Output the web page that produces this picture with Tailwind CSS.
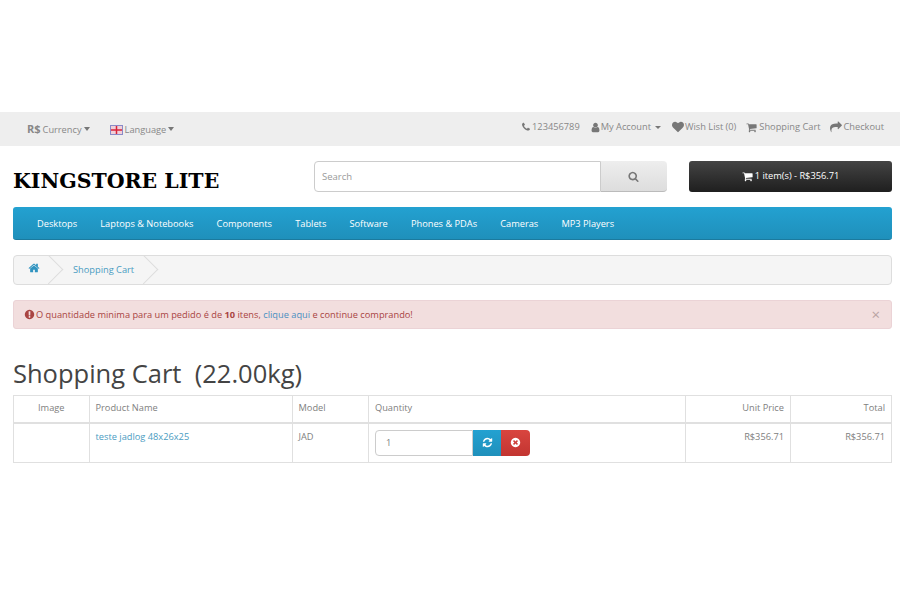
<!DOCTYPE html>
<html>
<head>
<meta charset="utf-8">
<title>Shopping Cart</title>
<script src="https://cdn.jsdelivr.net/npm/@tailwindcss/browser@4"></script>
</head>
<body class="bg-white font-['Open_Sans',sans-serif] text-[9.25px] text-[#666] h-[600px] overflow-hidden">
<div class="pt-[112px]">

  <!-- top bar -->
  <div class="h-[34px] bg-[#eee] flex items-center justify-between pl-[27px] pr-[16px] text-[#888]">
    <div class="flex items-center">
      <span class="flex items-center mt-[1px]"><b class="text-[#888] text-[11px] mr-[2px]">R$</b>Currency<i class="ml-[2px] mt-[-1px] border-x-[3.5px] border-x-transparent border-t-[4px] border-t-[#777]"></i></span>
      <span class="flex items-center ml-[20px] mt-[1px]">
        <svg class="w-[13px] h-[10px] mr-[2px]" viewBox="0 0 13 10"><rect width="13" height="10" fill="#8a8ac8"/><rect x="1" y="1" width="11" height="8" fill="#f0d0d8"/><path d="M1 5h11M6.500 1v8" stroke="#d8233a" stroke-width="1.500"/></svg>Language<i class="ml-[2px] mt-[-1px] border-x-[3.5px] border-x-transparent border-t-[4px] border-t-[#777]"></i>
      </span>
    </div>
    <div class="flex items-center mt-[-4px]">
      <span class="flex items-center">
        <svg class="w-[10px] h-[10px] mr-[1px]" viewBox="0 0 1792 1792" fill="#777"><path d="M1600 1240q0 27-10 70.500t-21 68.500q-21 50-122 106-94 51-186 51-27 0-53-3.500t-57.500-12.500-47-14.500-55.500-20.500-49-18q-98-35-175-83-127-79-264-216t-216-264q-48-77-83-175-3-9-18-49t-20.500-55.500-14.500-47-12.500-57.500-3.500-53q0-92 51-186 56-101 106-122 25-11 68.500-21t70.500-10q14 0 21 3 18 6 53 76 11 19 30 54t35 63.500 31 53.500q3 4 17.500 25t21.500 35.500 7 28.500q0 20-28.500 50t-62 55-62 53-28.500 46q0 9 5 22.500t8.500 20.500 14 24 11.500 19q76 137 174 235t235 174q2 1 19 11.500t24 14 20.500 8.500 22.500 5q18 0 46-28.500t53-62 55-62 50-28.500q14 0 28.500 7t35.500 21.500 25 17.500q25 15 53.500 31t63.500 35 54 30q70 35 76 53 3 7 3 21z"/></svg>123456789</span>
      <span class="flex items-center ml-[10px]">
        <svg class="w-[11px] h-[11px]" viewBox="0 0 1792 1792" fill="#777"><path d="M1536 1399q0 109-62.500 187t-150.500 78h-854q-88 0-150.500-78t-62.500-187q0-85 8.500-160.500t31.500-152 58.500-131 94-89 134.500-34.500q131 128 313 128t313-128q76 0 134.500 34.500t94 89 58.500 131 31.500 152 8.500 160.500zm-256-887q0 159-112.500 271.500t-271.500 112.500-271.500-112.500-112.500-271.500 112.500-271.500 271.500-112.500 271.500 112.500 112.500 271.500z"/></svg>My Account<i class="ml-[4px] mt-[1px] border-x-[3px] border-x-transparent border-t-[3px] border-t-[#777]"></i></span>
      <span class="flex items-center ml-[11px]">
        <svg class="w-[12px] h-[12px] mr-[1px]" viewBox="0 0 1792 1792" fill="#777"><path d="M896 1664q-26 0-44-18l-624-602q-10-8-27.500-26t-55.500-65.500-68-97.500-53.500-121-23.500-138q0-220 127-344t351-124q62 0 126.500 21.500t120 58 95.500 68.500 76 68q36-36 76-68t95.500-68.500 120-58 126.500-21.500q224 0 351 124t127 344q0 221-229 450l-623 600q-18 18-44 18z"/></svg>Wish List (0)</span>
      <span class="flex items-center ml-[10px]">
        <svg class="w-[11px] h-[11px] mr-[2px]" viewBox="0 0 1792 1792" fill="#777"><path d="M704 1536q0 52-38 90t-90 38-90-38-38-90 38-90 90-38 90 38 38 90zm896 0q0 52-38 90t-90 38-90-38-38-90 38-90 90-38 90 38 38 90zm128-1088v512q0 24-16.500 42.500t-40.500 21.500l-1044 122q13 60 13 70 0 16-24 64h920q26 0 45 19t19 45-19 45-45 19h-1024q-26 0-45-19t-19-45q0-11 8-31.500t16-36 21.500-40 15.500-29.500l-177-823h-204q-26 0-45-19t-19-45 19-45 45-19h256q16 0 28.500 6.500t19.500 15.500 13 24.500 8 26 5.500 29.500 4.500 26h1201q26 0 45 19t19 45z"/></svg>Shopping Cart</span>
      <span class="flex items-center ml-[10px]">
        <svg class="w-[12px] h-[12px] mr-[1px]" viewBox="0 0 1792 1792" fill="#777"><path d="M1792 640q0 26-19 45l-512 512q-19 19-45 19t-45-19-19-45v-256h-224q-98 0-175.500 6t-154 21.500-133 42.500-105.500 69.500-80 101-48.500 138.500-17.500 181q0 55 5 123 0 6 2.500 23.500t2.500 26.500q0 15-8.500 25t-23.500 10q-16 0-28-17-7-9-13-22t-13.500-30-10.500-24q-127-285-127-451 0-199 53-333 162-403 875-403h224v-256q0-26 19-45t45-19 45 19l512 512q19 19 19 45z"/></svg>Checkout</span>
    </div>
  </div>

  <div class="ml-[13px] w-[879px]">
    <!-- header -->
    <div class="h-[61px] flex items-center">
      <div class="w-[301px] font-['DejaVu_Serif',serif] font-bold text-[20.5px] text-black mt-[9px] whitespace-nowrap">KINGSTORE LITE</div>
      <div class="flex w-[353px] h-[31px] mb-[1px]">
        <input class="w-[287px] h-full border border-[#ccc] rounded-l-[4px] bg-white px-[7px] text-[9.5px] placeholder:text-[#999]" placeholder="Search">
        <div class="flex-1 flex items-center justify-center bg-gradient-to-b from-[#eee] to-[#ddd] border-b border-[#bbb] rounded-r-[4px]">
          <svg class="w-[11px] h-[11px] mt-[2px] mr-[2px]" viewBox="0 0 1792 1792" fill="#777"><path d="M1216 832q0-185-131.500-316.500t-316.500-131.500-316.500 131.500-131.500 316.500 131.500 316.500 316.500 131.500 316.500-131.500 131.500-316.500zm512 832q0 52-38 90t-90 38q-54 0-90-38l-343-342q-179 124-399 124-143 0-273.500-55.500t-225-150-150-225-55.500-273.500 55.500-273.500 150-225 225-150 273.500-55.500 273.500 55.500 225 150 150 225 55.500 273.500q0 220-124 399l343 343q37 37 37 90z"/></svg>
        </div>
      </div>
      <div class="ml-[22px] w-[203px] h-[31px] mb-[1px] rounded-[3px] bg-gradient-to-b from-[#444] to-[#1f1f1f] flex items-center justify-center text-white">
        <svg class="w-[11px] h-[11px] mr-[2px]" viewBox="0 0 1792 1792" fill="#fff"><path d="M704 1536q0 52-38 90t-90 38-90-38-38-90 38-90 90-38 90 38 38 90zm896 0q0 52-38 90t-90 38-90-38-38-90 38-90 90-38 90 38 38 90zm128-1088v512q0 24-16.500 42.500t-40.500 21.500l-1044 122q13 60 13 70 0 16-24 64h920q26 0 45 19t19 45-19 45-45 19h-1024q-26 0-45-19t-19-45q0-11 8-31.500t16-36 21.500-40 15.500-29.500l-177-823h-204q-26 0-45-19t-19-45 19-45 45-19h256q16 0 28.500 6.500t19.500 15.500 13 24.500 8 26 5.500 29.500 4.500 26h1201q26 0 45 19t19 45z"/></svg>1 item(s) - R$356.71
      </div>
    </div>

    <!-- menu -->
    <nav class="h-[33px] pt-[1px] rounded-[3px] bg-gradient-to-b from-[#23a1d1] to-[#1f90bb] border-b border-[#1b7a9e] flex items-center pl-[24px] gap-[23.15px] text-white">
      <span>Desktops</span><span>Laptops &amp; Notebooks</span><span>Components</span><span>Tablets</span><span>Software</span><span>Phones &amp; PDAs</span><span>Cameras</span><span>MP3 Players</span>
    </nav>

    <!-- breadcrumb -->
    <div class="mt-[15px] h-[30px] border border-[#ddd] rounded-[4px] bg-[#f5f5f5] flex items-center overflow-hidden relative text-[#4a9cc2]">
      <svg class="w-[12px] h-[12px] ml-[14px] mt-[-4px]" viewBox="0 0 1792 1792" fill="#2f93c0"><path d="M1472 992v480q0 26-19 45t-45 19h-384v-384h-256v384h-384q-26 0-45-19t-19-45v-480q0-1 .5-3t.5-3l575-474 575 474q1 2 1 6zm223-69l-62 74q-8 9-21 11h-3q-13 0-21-7l-692-577-692 577q-12 8-24 7-13-2-21-11l-62-74q-8-10-7-23.500t11-21.500l719-599q32-26 76-26t76 26l244 204v-195q0-14 9-23t23-9h192q14 0 23 9t9 23v408l219 182q10 8 11 21.500t-7 23.500z"/></svg>
      <div class="absolute left-[24px] top-[3px] w-[21px] h-[21px] rotate-45 border-t border-r border-[#ddd]"></div>
      <span class="ml-[33px]">Shopping Cart</span>
      <div class="absolute left-[119px] top-[3px] w-[21px] h-[21px] rotate-45 border-t border-r border-[#ddd]"></div>
    </div>

    <!-- alert -->
    <div class="mt-[15px] h-[29px] rounded-[3px] bg-[#f2dede] border border-[#ebd3d6] flex items-center pl-[10px] pr-[11px] text-[#a94442]">
      <svg class="w-[11px] h-[11px] mr-[1px]" viewBox="0 0 1792 1792" fill="#a94442"><path d="M896 128q209 0 385.500 103t279.500 279.500 103 385.500-103 385.500-279.500 279.500-385.500 103-385.500-103-279.500-279.500-103-385.500 103-385.500 279.500-279.500 385.500-103zm128 1247v-190q0-14-9-23.500t-22-9.500h-192q-13 0-23 10t-10 23v190q0 13 10 23t23 10h192q13 0 22-9.500t9-23.500zm-2-344l18-621q0-12-10-18-10-8-24-8h-220q-14 0-24 8-10 6-10 18l17 621q0 10 10 17.500t24 7.500h185q14 0 23.500-7.500t10.500-17.500z"/></svg>
      <span class="whitespace-pre">O quantidade minima para um pedido é de <b>10</b> itens, <span class="text-[#4a8fc0]">clique aqui</span> e continue comprando!</span>
      <span class="ml-auto text-[15px] leading-none text-[#b9a3a3]">×</span>
    </div>

    <!-- title -->
    <h1 class="mt-[26px] text-[25.5px] leading-[36px] text-[#444] whitespace-pre">Shopping Cart  (22.00kg)</h1>

    <!-- cart table -->
    <table class="mt-[4px] w-[879px] table-fixed border-collapse">
      <thead>
        <tr class="h-[27px] text-[#808080]">
          <td class="w-[75.5px] border border-[#e0e0e0] border-b-2 text-center pb-[1px]">Image</td>
          <td class="w-[203px] border border-[#e0e0e0] border-b-2 px-[6px] pb-[1px]">Product Name</td>
          <td class="w-[76.5px] border border-[#e0e0e0] border-b-2 px-[6px] pb-[1px]">Model</td>
          <td class="w-[317px] border border-[#e0e0e0] border-b-2 px-[6px] pb-[1px]">Quantity</td>
          <td class="w-[105px] border border-[#e0e0e0] border-b-2 px-[6px] pb-[1px] text-right">Unit Price</td>
          <td class="border border-[#e0e0e0] border-b-2 px-[6px] pb-[1px] text-right">Total</td>
        </tr>
      </thead>
      <tbody>
        <tr class="h-[40px] align-top text-[#808080]">
          <td class="border border-[#e0e0e0]"></td>
          <td class="border border-[#e0e0e0] px-[6px] pt-[6px] text-[#4a9cc2]">teste jadlog 48x26x25</td>
          <td class="border border-[#e0e0e0] px-[6px] pt-[6px]">JAD</td>
          <td class="border border-[#e0e0e0] px-[6px] pt-[6px]">
            <div class="flex h-[26px] w-[155px]">
              <div class="w-[98px] border border-[#ccc] rounded-l-[4px] pl-[10px] flex items-center">1</div>
              <div class="w-[28px] bg-gradient-to-b from-[#23a1d1] to-[#1f90bb] flex items-center justify-center">
                <svg class="w-[11px] h-[11px]" viewBox="0 0 1792 1792" fill="#fff"><path d="M1639 1056q0 5-1 7-64 268-268 434.500t-478 166.500q-146 0-282.500-55t-243.500-157l-129 129q-19 19-45 19t-45-19-19-45v-448q0-26 19-45t45-19h448q26 0 45 19t19 45-19 45l-137 137q71 66 161 102t187 36q134 0 250-65t186-179q11-17 53-117 8-23 30-23h192q13 0 22.500 9.500t9.500 22.500zm25-800v448q0 26-19 45t-45 19h-448q-26 0-45-19t-19-45 19-45l138-138q-148-137-349-137-134 0-250 65t-186 179q-11 17-53 117-8 23-30 23h-199q-13 0-22.500-9.500t-9.500-22.500v-7q65-268 270-434.500t480-166.500q146 0 284 55.500t245 156.500l130-129q19-19 45-19t45 19 19 45z"/></svg>
              </div>
              <div class="w-[29px] rounded-r-[4px] bg-gradient-to-b from-[#d9453f] to-[#c23531] flex items-center justify-center">
                <svg class="w-[11px] h-[11px]" viewBox="0 0 1792 1792" fill="#fff"><path d="M1277 1122q0-26-19-45l-181-181 181-181q19-19 19-45 0-27-19-46l-90-90q-19-19-46-19-26 0-45 19l-181 181-181-181q-19-19-45-19-27 0-46 19l-90 90q-19 19-19 46 0 26 19 45l181 181-181 181q-19 19-19 45 0 27 19 46l90 90q19 19 46 19 26 0 45-19l181-181 181 181q19 19 45 19 27 0 46-19l90-90q19-19 19-46zm387-226q0 209-103 385.500t-279.500 279.500-385.500 103-385.500-103-279.500-279.500-103-385.500 103-385.500 279.500-279.500 385.500-103 385.500 103 279.500 279.500 103 385.500z"/></svg>
              </div>
            </div>
          </td>
          <td class="border border-[#e0e0e0] px-[6px] pt-[6px] text-right">R$356.71</td>
          <td class="border border-[#e0e0e0] px-[6px] pt-[6px] text-right">R$356.71</td>
        </tr>
      </tbody>
    </table>
  </div>
</div>
</body>
</html>
